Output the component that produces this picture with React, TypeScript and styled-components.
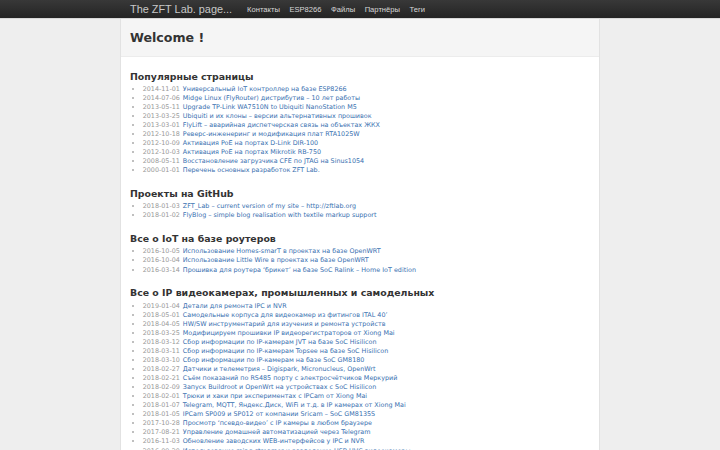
import React from 'react';
import styled, { createGlobalStyle } from 'styled-components';

// ── Data ──────────────────────────────────────────────────

interface Post {
  date: string;
  title: string;
}

interface Section {
  title: string;
  posts: Post[];
}

const NAV = ['Контакты', 'ESP8266', 'Файлы', 'Партнёры', 'Теги'];

const SECTIONS: Section[] = [
  {
    title: 'Популярные страницы',
    posts: [
      { date: '2014-11-01', title: 'Универсальный IoT контроллер на базе ESP8266' },
      { date: '2014-07-06', title: 'Midge Linux (FlyRouter) дистрибутив – 10 лет работы' },
      { date: '2013-05-11', title: 'Upgrade TP-Link WA7510N to Ubiquiti NanoStation M5' },
      { date: '2013-03-25', title: 'Ubiquiti и их клоны – версии альтернативных прошивок' },
      { date: '2013-03-01', title: 'FlyLift – аварийная диспетчерская связь на объектах ЖКХ' },
      { date: '2012-10-18', title: 'Реверс-инженеринг и модификация плат RTA1025W' },
      { date: '2012-10-09', title: 'Активация PoE на портах D-Link DIR-100' },
      { date: '2012-10-03', title: 'Активация PoE на портах Mikrotik RB-750' },
      { date: '2008-05-11', title: 'Восстановление загрузчика CFE по JTAG на Sinus1054' },
      { date: '2000-01-01', title: 'Перечень основных разработок ZFT Lab.' },
    ],
  },
  {
    title: 'Проекты на GitHub',
    posts: [
      { date: '2018-01-03', title: 'ZFT_Lab – current version of my site – http://zftlab.org' },
      { date: '2018-01-02', title: 'FlyBlog – simple blog realisation with textile markup support' },
    ],
  },
  {
    title: 'Все о IoT на базе роутеров',
    posts: [
      { date: '2016-10-05', title: 'Использование Homes-smarT в проектах на базе OpenWRT' },
      { date: '2016-10-04', title: 'Использование Little Wire в проектах на базе OpenWRT' },
      { date: '2016-03-14', title: 'Прошивка для роутера ‘брикет’ на базе SoC Ralink – Home IoT edition' },
    ],
  },
  {
    title: 'Все о IP видеокамерах, промышленных и самодельных',
    posts: [
      { date: '2019-01-04', title: 'Детали для ремонта IPC и NVR' },
      { date: '2018-05-01', title: 'Самодельные корпуса для видеокамер из фитингов ITAL 40’' },
      { date: '2018-04-05', title: 'HW/SW инструментарий для изучения и ремонта устройств' },
      { date: '2018-03-25', title: 'Модифицируем прошивки IP видеорегистраторов от Xiong Mai' },
      { date: '2018-03-12', title: 'Сбор информации по IP-камерам JVT на базе SoC Hisilicon' },
      { date: '2018-03-11', title: 'Сбор информации по IP-камерам Topsee на базе SoC Hisilicon' },
      { date: '2018-03-10', title: 'Сбор информации по IP-камерам на базе SoC GM8180' },
      { date: '2018-02-27', title: 'Датчики и телеметрия – Digispark, Micronucleus, OpenWrt' },
      { date: '2018-02-21', title: 'Съём показаний по RS485 порту с электросчётчиков Меркурий' },
      { date: '2018-02-09', title: 'Запуск Buildroot и OpenWrt на устройствах с SoC Hisilicon' },
      { date: '2018-02-01', title: 'Трюки и хаки при экспериментах с IPCam от Xiong Mai' },
      { date: '2018-01-07', title: 'Telegram, MQTT, Яндекс.Диск, WiFi и т.д. в IP камерах от Xiong Mai' },
      { date: '2018-01-05', title: 'IPCam SP009 и SP012 от компании Sricam – SoC GM8135S' },
      { date: '2017-10-28', title: 'Просмотр ‘псевдо-видео’ с IP камеры в любом браузере' },
      { date: '2017-08-21', title: 'Управление домашней автоматизацией через Telegram' },
      { date: '2016-11-03', title: 'Обновление заводских WEB-интерфейсов у IPC и NVR' },
      { date: '2016-09-20', title: 'Использование mjpg-streamer и разделение USB UVC видеокамеры' },
      { date: '2016-09-12', title: 'Поддержка IP камер в прошивке для роутеров' },
    ],
  },
];

// ── Styled ────────────────────────────────────────────────

const GlobalStyle = createGlobalStyle`
  html, body {
    margin: 0;
    padding: 0;
    background: #eeeeee;
  }
  body {
    font-family: "DejaVu Sans", sans-serif;
    color: #333;
  }
`;

const NavBar = styled.header`
  height: 19px;
  background: linear-gradient(to bottom, #383838, #242424);
  border-bottom: 1px solid #d8d8d8;
  box-sizing: border-box;
`;

const NavInner = styled.div`
  width: 480px;
  margin: 0 auto;
  padding: 0 10px;
  box-sizing: border-box;
  height: 100%;
  display: flex;
  align-items: center;
`;

const Brand = styled.a`
  font-family: "Liberation Sans", Arial, sans-serif;
  font-size: 10.9px;
  color: #c8c8c8;
  text-decoration: none;
  margin-right: 15px;
  white-space: nowrap;
`;

const NavLinks = styled.nav`
  display: flex;
  gap: 9.5px;
`;

const NavLink = styled.a`
  font-family: "Liberation Sans", Arial, sans-serif;
  font-size: 7.6px;
  color: #d8d8d8;
  text-decoration: none;
`;

const Container = styled.main`
  width: 480px;
  margin: 0 auto;
  background: #fff;
  border-left: 1px solid #e2e2e2;
  border-right: 1px solid #e2e2e2;
  box-sizing: border-box;
  min-height: 431px;
`;

const Header = styled.div`
  height: 38px;
  background: #f5f5f5;
  border-bottom: 1px solid #ececec;
  box-sizing: border-box;
  padding: 0 9px;
  display: flex;
  align-items: center;
`;

const Title = styled.h1`
  margin: 0;
  font-size: 12.6px;
  font-weight: bold;
  color: #333;
`;

const Content = styled.div`
  padding: 13.5px 9px 20px;
`;

const Block = styled.section`
  & + & {
    margin-top: 12.5px;
  }
`;

const BlockTitle = styled.h2`
  margin: 0;
  font-size: 9.4px;
  line-height: 12px;
  font-weight: bold;
  color: #333;
`;

const List = styled.ul`
  margin: 2.4px 0 0;
  padding-left: 12.7px;
  list-style: disc;
`;

const Item = styled.li`
  font-size: 6.4px;
  line-height: 9.07px;
  white-space: nowrap;

  &::marker {
    color: #aaa;
  }
`;

const PostDate = styled.span`
  color: #999;
  margin-right: 3px;
`;

const PostLink = styled.a`
  color: #3870b0;
  text-decoration: none;
`;

// ── Component ─────────────────────────────────────────────

export default function App() {
  return (
    <>
      <GlobalStyle />
      <NavBar>
        <NavInner>
          <Brand href="#">The ZFT Lab. page...</Brand>
          <NavLinks>
            {NAV.map((n) => (
              <NavLink key={n} href="#">
                {n}
              </NavLink>
            ))}
          </NavLinks>
        </NavInner>
      </NavBar>
      <Container>
        <Header>
          <Title>Welcome !</Title>
        </Header>
        <Content>
          {SECTIONS.map((s) => (
            <Block key={s.title}>
              <BlockTitle>{s.title}</BlockTitle>
              <List>
                {s.posts.map((p) => (
                  <Item key={p.date + p.title}>
                    <PostDate>{p.date}</PostDate>
                    <PostLink href="#">{p.title}</PostLink>
                  </Item>
                ))}
              </List>
            </Block>
          ))}
        </Content>
      </Container>
    </>
  );
}
